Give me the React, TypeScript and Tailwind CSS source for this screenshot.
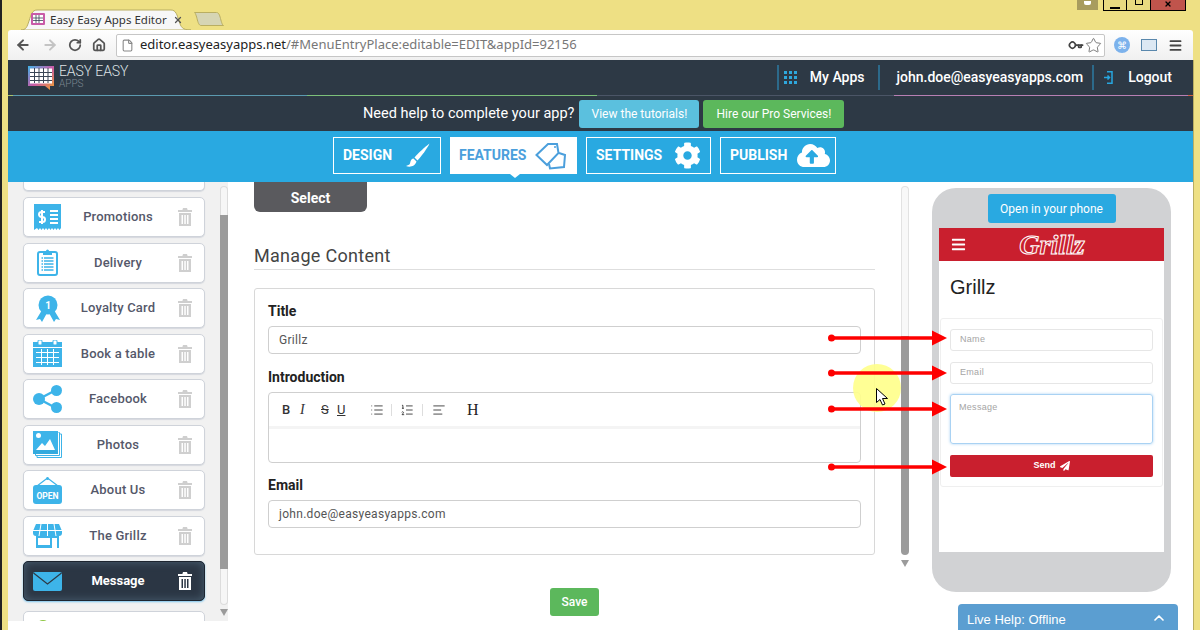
import React from "react";
import {
  ArrowLeft,
  ArrowRight,
  RotateCw,
  Home,
  File,
  Star,
  Key,
  Menu,
  List,
  ListOrdered,
  AlignLeft,
  ChevronUp,
  X,
} from "lucide-react";
import { FaCog, FaCloudUploadAlt, FaPaperPlane, FaBars } from "react-icons/fa";

function Trash({ dark }: { dark?: boolean }) {
  return (
    <svg width="14" height="18" viewBox="0 0 14 18" className={dark ? "text-white" : "text-[#cfcfcf]"}>
      <path fill="currentColor" d="M5 0h4l.6 2H14v2H0V2h4.400z" />
      <path fill="currentColor" fillRule="evenodd" d="M1 5h12v13H1zM3.500 7v9h1.500V7zM6.300 7v9h1.500V7zM9 7v9h1.500V7z" />
    </svg>
  );
}

function PromoIcon() {
  return (
    <svg width="27" height="27" viewBox="0 0 27 27">
      <path fill="#3db4e9" d="M0 0h27v24l-1.500 2-1.500-2-1.500 2-1.500-2-1.500 2-1.500-2-1.500 2-1.500-2-1.500 2-1.500-2-1.500 2-1.500-2-1.500 2-1.500-2-1.500 2-1.500-2L0 26z" />
      <path fill="none" stroke="#fff" strokeWidth="2" d="M11 8H7.500a2.200 2.200 0 0 0 0 5h1a2.200 2.200 0 0 1 0 5H5M8 6v14" />
      <path stroke="#fff" strokeWidth="2" d="M16 7h8M16 11h8M16 15h8M16 19h8" />
    </svg>
  );
}

function ClipboardIcon() {
  return (
    <svg width="21" height="27" viewBox="0 0 21 27">
      <rect x="1" y="3" width="19" height="23" rx="2" fill="#fff" stroke="#3db4e9" strokeWidth="2" />
      <path fill="#3db4e9" d="M6 2h3a1.500 1.500 0 0 1 3 0h3v4H6z" />
      <path stroke="#3db4e9" strokeWidth="1.300" strokeDasharray="1.500 1 10 0" d="M4.500 9h12M4.500 12h12M4.500 15h12M4.500 18h12M4.500 21h12" />
    </svg>
  );
}

function RibbonIcon() {
  return (
    <svg width="24" height="27" viewBox="0 0 24 27">
      <path fill="#3db4e9" d="M6 15 0 25l4-1 2 3 5-9zM18 15l6 10-4-1-2 3-5-9z" />
      <circle cx="12" cy="10" r="9.500" fill="#3db4e9" />
      <text x="12" y="14" textAnchor="middle" fill="#fff" fontSize="10" fontWeight="700" fontFamily="Roboto, sans-serif">1</text>
    </svg>
  );
}

function CalendarIcon() {
  return (
    <svg width="29" height="27" viewBox="0 0 29 27">
      <path fill="#3db4e9" d="M0 2h29v25H0z" />
      <rect x="5" y="0" width="4" height="5" rx="1" fill="#fff" stroke="#3db4e9" />
      <rect x="20" y="0" width="4" height="5" rx="1" fill="#fff" stroke="#3db4e9" />
      <path stroke="#fff" strokeWidth="1" d="M0 7.500h29M3 12.500h23M3 17.500h23M3 22.500h23M8.500 9v16M14.500 9v16M20.500 9v16" />
    </svg>
  );
}

function ShareIcon() {
  return (
    <svg width="30" height="28" viewBox="0 0 30 28">
      <path stroke="#3db4e9" strokeWidth="2.500" d="M6 14 23 5M6 14l17 9" />
      <circle cx="6" cy="14" r="6" fill="#3db4e9" />
      <circle cx="23.500" cy="5.500" r="5.500" fill="#3db4e9" />
      <circle cx="23.500" cy="22.500" r="5.500" fill="#3db4e9" />
    </svg>
  );
}

function PhotosIcon() {
  return (
    <svg width="29" height="27" viewBox="0 0 29 27">
      <path fill="none" stroke="#3db4e9" d="M27 3h1.500v23.500H4V25M25.500 1.500h1v23h-24V23" />
      <path fill="#3db4e9" d="M0 0h25v23H0z" />
      <path fill="#fff" d="M3 19l6-7 3 3 5-7 5 11z" />
      <circle cx="5.500" cy="4.500" r="2.500" fill="#fff" />
      <path fill="#2a9fd4" d="M0 19h25v4H0z" opacity=".5" />
    </svg>
  );
}

function OpenIcon() {
  return (
    <svg width="29" height="27" viewBox="0 0 29 27">
      <path fill="none" stroke="#3db4e9" strokeWidth="1.200" d="M4 9 14.500 1 25 9" />
      <circle cx="14.500" cy="1.500" r="1.500" fill="#3db4e9" />
      <rect x="0" y="8" width="29" height="19" rx="3" fill="#3db4e9" />
      <text x="14.500" y="22" textAnchor="middle" fill="#fff" fontSize="8.500" fontWeight="700" fontFamily="Roboto, sans-serif">OPEN</text>
    </svg>
  );
}

function ShopIcon() {
  return (
    <svg width="29" height="24" viewBox="0 0 29 24">
      <path fill="#3db4e9" d="M3 0h23l3 7v2a3 3 0 0 1-3 3H3a3 3 0 0 1-3-3V7z" />
      <path stroke="#fff" d="M0 6.500h29M8 0 6 12M14.500 0v12M21 0l2 12" />
      <path fill="#3db4e9" d="M3 12h23v12H3z" />
      <path fill="#fff" d="M5 14h12v7H5zM19 14h5v10h-5z" />
    </svg>
  );
}

function MailIcon() {
  return (
    <svg width="29" height="19" viewBox="0 0 29 19">
      <rect width="29" height="19" rx="2" fill="#3db4e9" />
      <path fill="none" stroke="#2d3945" strokeWidth="1.200" d="M.5 1 14.500 12 28.500 1" />
    </svg>
  );
}

function LogoIcon() {
  return (
    <svg width="28" height="26" viewBox="0 0 28 26">
      <defs>
        <linearGradient id="logoEdge" x1="0" y1="0" x2="1" y2="1">
          <stop offset="0" stopColor="#3fb4e8" />
          <stop offset=".5" stopColor="#c95ba8" />
          <stop offset="1" stopColor="#f2a32a" />
        </linearGradient>
      </defs>
      <path fill="url(#logoEdge)" d="M1 1h26v20h-4v4l-5-4H1z" />
      <path fill="#fff" d="M3 3.500h22v15H3z" />
      <path stroke="#3a4656" strokeWidth="1" d="M3 7.500h22M3 11.500h22M3 15.500h22M7.500 3v15M12 3v15M16.500 3v15M21 3v15" />
    </svg>
  );
}

function GridDots() {
  return (
    <svg width="13" height="13" viewBox="0 0 13 13" fill="#2ea7dc">
      <path d="M0 0h3v3H0zM5 0h3v3H5zM10 0h3v3h-3zM0 5h3v3H0zM5 5h3v3H5zM10 5h3v3h-3zM0 10h3v3H0zM5 10h3v3H5zM10 10h3v3h-3z" />
    </svg>
  );
}

function BrushIcon() {
  return (
    <svg width="24" height="25" viewBox="0 0 24 25" fill="#fff">
      <path d="M23.500 .5C19 4 12 10 8.500 14.500l3 3C15.500 13 21 6 23.500 .5z" />
      <path d="M7.500 15.500c-3 .5-3 3.500-3.500 5-.4 1.400-2.500 2-4 2.500 4 1.500 9 .5 10.500-4.500z" />
    </svg>
  );
}

function TagsIcon() {
  return (
    <svg width="32" height="28" viewBox="0 0 32 28" fill="none" stroke="#4b9fdc" strokeWidth="2">
      <path d="M1.500 13 13 2h9l1.500 9L12 23z" fill="#fff" />
      <circle cx="20" cy="5" r="1" fill="#4b9fdc" stroke="none" />
      <path d="M24 11l6 2-1 12-14 1.500L14 22" />
    </svg>
  );
}

function LogoutIcon() {
  return (
    <svg width="9" height="13" viewBox="0 0 9 13" fill="none" stroke="#27a6df" strokeWidth="1.500">
      <path d="M3 .8h5v11.400H3M0 6.500h5M3.500 4.500l2 2-2 2" />
    </svg>
  );
}

function Cursor() {
  return (
    <svg width="12" height="18" viewBox="0 0 12 18">
      <path fill="#fff" stroke="#000" d="M.5.500v14l3.500-3 2.500 5.500 2.500-1-2.500-5.500h5z" />
    </svg>
  );
}

function PointerArrow({ top }: { top: number }) {
  return (
    <svg
      width="120"
      height="18"
      viewBox="0 0 120 18"
      className="absolute left-[826px]"
      style={{ top }}
    >
      <circle cx="3.500" cy="9" r="3.500" fill="#fe0000" />
      <path stroke="#fe0000" strokeWidth="3.500" d="M3 9h104" />
      <path fill="#fe0000" d="M104 1.500 119 9l-15 7.500z" />
    </svg>
  );
}

const sideItems = [
  { name: "Promotions", icon: <PromoIcon /> },
  { name: "Delivery", icon: <ClipboardIcon /> },
  { name: "Loyalty Card", icon: <RibbonIcon /> },
  { name: "Book a table", icon: <CalendarIcon /> },
  { name: "Facebook", icon: <ShareIcon /> },
  { name: "Photos", icon: <PhotosIcon /> },
  { name: "About Us", icon: <OpenIcon /> },
  { name: "The Grillz", icon: <ShopIcon /> },
];

function Sidebar() {
  return (
    <div className="w-[220px] h-[439px] bg-[#f1f1f1] flex shrink-0 overflow-hidden">
      <div className="w-[212px] pl-[15px] pr-[15px]">
        <div className="h-[9px] mb-[6px] bg-white border-x border-b border-[#cfd3da] rounded-b-[5px] shadow-[0_1px_1px_#d5d8de]" />
        {sideItems.map(({ name, icon }) => (
          <div
            key={name}
            className="h-10 mb-[5.5px] bg-white border border-[#cfd3da] rounded-[5px] shadow-[0_1px_1px_#d5d8de] flex items-center"
          >
            <div className="w-[46px] flex justify-center pl-[1px] pr-0 shrink-0">{icon}</div>
            <div className="flex-1 text-center text-[13px] font-medium text-[#55586a] tracking-[0.2px]">{name}</div>
            <div className="w-[38px] flex justify-center pr-[1px]">
              <Trash />
            </div>
          </div>
        ))}
        <div className="h-10 mb-[10px] bg-[#2b3644] border border-[#1d2530] rounded-[5px] shadow-[inset_0_0_8px_#4a6072,0_1px_2px_#7cc4ec] flex items-center">
          <div className="w-[46px] flex justify-center shrink-0">
            <MailIcon />
          </div>
          <div className="flex-1 text-center text-[13px] font-bold text-white">Message</div>
          <div className="w-[38px] flex justify-center pr-[1px]">
            <Trash dark />
          </div>
        </div>
        <div className="h-10 bg-white border border-[#cfd3da] rounded-[5px] flex justify-center-safe pr-[143px] pt-[8px]">
          <div className="w-[14px] h-[14px] rounded-full bg-[#8cc63f]" />
        </div>
      </div>
      <div className="w-2 flex flex-col items-center pt-[4px]">
        <div className="w-2 h-[29px] bg-[#f6f6f6] border-x border-t border-[#dcdcdc] rounded-t-[4px]" />
        <div className="w-2 h-[354px] bg-[#9b9b9b]" />
        <div className="w-2 h-[36px] bg-[#f6f6f6] border-x border-b border-[#dcdcdc] rounded-b-[4px]" />
        <div className="mt-[4px] w-0 h-0 border-x-[4px] border-x-transparent border-t-[7px] border-t-[#9b9b9b]" />
      </div>
    </div>
  );
}

function TextField({ value }: { value: string }) {
  return (
    <div className="h-[28px] border border-[#cfcfcf] rounded-[4px] px-[10px] flex items-center text-[12px] text-[#555] tracking-[0.3px]">
      {value}
    </div>
  );
}

function EditorToolbar() {
  return (
    <div className="h-[36px] border-b-[3px] border-[#f4f4f4] flex items-center pl-[13px] text-[#333] text-[13px]">
      <span className="w-[18px] font-medium">B</span>
      <span className="w-[21px] italic font-serif-none [font-family:'Liberation_Serif',serif] text-[14px]">I</span>
      <span className="w-[16px] line-through">S</span>
      <span className="w-[33px] underline">U</span>
      <List size={14} strokeWidth={1.500} />
      <span className="w-[1px] h-[12px] bg-[#ddd] ml-[7px] mr-[8px]" />
      <ListOrdered size={14} strokeWidth={1.500} />
      <span className="w-[1px] h-[12px] bg-[#ddd] ml-[8px] mr-[9px]" />
      <AlignLeft size={14} strokeWidth={1.500} />
      <span className="ml-[21px] text-[16px] font-medium text-[#222] [font-family:'Liberation_Serif',serif]">H</span>
    </div>
  );
}

function MainPane() {
  return (
    <div className="w-[673px] shrink-0 pl-[26px]">
      <div className="w-[113px] h-[30px] bg-[#5a5a5e] rounded-b-[6px] text-white text-[14px] font-bold flex items-center justify-center pt-[3px]">
        Select
      </div>
      <div className="w-[621px] mt-[33px] h-[25px] border-b border-[#dedede] text-[18px] leading-[22px] text-[#444] tracking-[0.3px]">
        Manage Content
      </div>
      <div className="w-[621px] h-[267px] mt-[18px] border border-[#d8d8d8] rounded-[3px] px-[13px] pt-[14px]">
        <div className="text-[14px] leading-[16px] font-bold text-[#222]">Title</div>
        <div className="mt-[7px]">
          <TextField value="Grillz" />
        </div>
        <div className="mt-[15px] text-[14px] leading-[16px] font-bold text-[#222]">Introduction</div>
        <div className="mt-[7px] h-[71px] border border-[#cfcfcf] rounded-[4px]">
          <EditorToolbar />
        </div>
        <div className="mt-[14px] text-[14px] leading-[16px] font-bold text-[#222]">Email</div>
        <div className="mt-[7px]">
          <TextField value="john.doe@easyeasyapps.com" />
        </div>
      </div>
      <div className="mt-[33px] ml-[296px] w-[49px] h-[28px] bg-[#5cb85c] rounded-[3px] text-white text-[12px] font-medium flex items-center justify-center">
        Save
      </div>
    </div>
  );
}

function MainScrollbar() {
  return (
    <div className="w-2 shrink-0 flex flex-col items-center pt-[4px]">
      <div className="w-2 h-[150px] bg-[#f8f8f8] border-x border-t border-[#e2e2e2] rounded-t-[4px]" />
      <div className="w-2 h-[219px] bg-[#9b9b9b] rounded-b-[4px]" />
      <div className="mt-[5px] w-0 h-0 border-x-[4px] border-x-transparent border-t-[7px] border-t-[#9b9b9b]" />
    </div>
  );
}

function PhoneInput({ label, className }: { label: string; className?: string }) {
  return (
    <div className={`border border-[#e6e6e6] rounded-[3px] px-[9px] flex text-[9px] font-medium text-[#a5a5a5] tracking-[0.3px] ${className}`}>
      {label}
    </div>
  );
}

function PhonePreview() {
  return (
    <div className="w-[239px] h-[404px] mt-[6px] ml-[23px] shrink-0 bg-[#d1d2d4] rounded-[24px] px-[7px] pt-[6px]">
      <div className="w-[128px] h-[29px] mx-auto bg-[#29a9e1] rounded-[3px] text-white text-[12px] flex items-center justify-center">
        Open in your phone
      </div>
      <div className="mt-[5px] h-[324px] bg-white">
        <div className="relative h-[33px] bg-[#c91f2e] flex items-center justify-center">
          <FaBars className="absolute left-[12px] top-[9px] text-white" size={15} />
          <span className="text-[#c91f2e] italic font-bold text-[28px] leading-none [font-family:'Liberation_Serif',serif] [-webkit-text-stroke:1px_#fff] ml-[1px]">
            Grillz
          </span>
        </div>
        <div className="h-[57px] pl-[11px] pt-[14px] text-[20px] leading-[24px] text-[#222] [font-family:'Liberation_Sans',sans-serif]">
          Grillz
        </div>
        <div className="mx-[1px] h-[169px] border border-[#efefef] rounded-[3px] px-[9px] pt-[10px] [font-family:'Liberation_Sans',sans-serif]">
          <PhoneInput label="Name" className="h-[22px] items-center" />
          <PhoneInput label="Email" className="h-[22px] mt-[11px] items-center" />
          <PhoneInput label="Message" className="h-[50px] mt-[10px] pt-[6px] !border-[#a9d2f3] shadow-[0_0_3px_#a9d2f3] !px-[8px]" />
          <div className="mt-[11px] h-[22px] bg-[#c91f2e] rounded-[2px] text-white text-[9px] font-bold flex items-center justify-center gap-[4px]">
            Send <FaPaperPlane size={10} />
          </div>
        </div>
      </div>
    </div>
  );
}

function BrowserChrome() {
  return (
    <>
      <div className="h-[30px] flex items-end pl-[13px] relative">
        <div className="relative w-[170px] h-[21px]">
          <svg width="170" height="21" viewBox="0 0 170 21" className="absolute inset-0">
            <path fill="#f7f7f7" stroke="#b9ae62" d="M0 21c5 0 6-3 8-9s3-11 8-11h134c5 0 6 5 8 11s3 9 12 9z" />
          </svg>
          <div className="relative h-full flex items-center pl-[9px] pr-[8px] text-[11.500px] text-[#333] [font-family:'Noto_Sans',sans-serif]">
            <svg width="14" height="13" viewBox="0 0 14 13" className="shrink-0 ml-[1px] mr-[5px]">
              <rect width="14" height="12" rx="1" fill="#c95ba8" />
              <rect x="2" y="2" width="10" height="8" fill="#fff" />
              <path stroke="#3a4656" strokeWidth=".8" d="M2 5h10M2 7.500h10M5 2v8M8 2v8" />
            </svg>
            <span className="flex-1">Easy Easy Apps Editor</span>
            <X size={10} strokeWidth={3} className="text-[#555]" />
          </div>
        </div>
        <svg width="30" height="14" viewBox="0 0 30 14" className="ml-[3px] mb-[4px]">
          <path fill="#d6d5b4" stroke="#b9ae62" d="M.5 .5h22c2 0 3 2 4 6s2 7 3 7H7c-2 0-3-3-4-7S1 .5.500.5z" />
        </svg>
        <div className="absolute right-[7px] top-0 flex items-start">
          <div className="w-[21px] h-[10px] bg-[#a89c5e] mr-[5px] flex justify-center">
            <div className="w-[7px] h-[4px] bg-white rounded-b-[2px] mt-[1px]" />
          </div>
          <div className="w-[24px] h-[11px] bg-[#e8da80] border border-t-0 border-black flex justify-center items-end pb-[1px]">
            <div className="w-[10px] h-[2px] bg-black" />
          </div>
          <div className="w-[23px] h-[11px] bg-[#e8da80] border-y border-t-0 border-black flex justify-center items-start">
            <div className="w-[8px] h-[5px] border border-t-0 border-black" />
          </div>
          <div className="w-[36px] h-[11px] bg-[#c0544c] border border-t-0 border-black flex justify-center items-start text-black">
            <X size={8} strokeWidth={4} />
          </div>
        </div>
      </div>
      <div className="h-[30px] bg-gradient-to-b from-white to-[#f0f0f0] rounded-t-[3px] flex items-center pl-[6px] pr-[6px] text-[#555]">
        <ArrowLeft size={16} strokeWidth={3} className="ml-[1px]" />
        <ArrowRight size={16} strokeWidth={3} className="ml-[11px] text-[#c4c4c4]" />
        <RotateCw size={14} strokeWidth={3} className="ml-[10px]" />
        <Home size={14} strokeWidth={3} className="ml-[10px]" />
        <div className="ml-[10px] h-[23px] w-[989px] bg-white border border-[#c6c6c6] rounded-[2px] flex items-center pl-[4px] pr-[2px] [font-family:'Noto_Sans',sans-serif] text-[13px]">
          <File size={13} className="text-[#888] mr-[6px]" />
          <span className="text-[#222]">editor.easyeasyapps.net</span>
          <span className="text-[#777] flex-1">/#MenuEntryPlace:editable=EDIT&amp;appId=92156</span>
          <Key size={13} strokeWidth={3} className="text-[#444] mr-[3px] rotate-45" />
          <Star size={17} strokeWidth={1.200} className="text-[#666]" />
        </div>
        <div className="ml-[9px] w-[16px] h-[16px] rounded-full bg-[#7cb2ec] text-white text-[10px] flex items-center justify-center">⌘</div>
        <div className="ml-[11px] w-[16px] h-[12px] bg-[#dce8f3] border border-[#5a88ad]" />
        <Menu size={15} strokeWidth={3} className="ml-[11px] text-[#444]" />
      </div>
    </>
  );
}

function AppHeader() {
  return (
    <div className="h-[35px] bg-[#2d3945] flex items-center pl-[19px] text-white text-[14px] font-medium relative">
      <LogoIcon />
      <div className="ml-[4px] mt-[-3px]">
        <div className="text-[14px] leading-[14px] font-light text-[#dfe3e6] tracking-[-0.1px]">EASY EASY</div>
        <div className="text-[10px] leading-[11px] font-light text-[#7c8791]">APPS</div>
      </div>
      <div className="flex-1" />
      <div className="w-[2px] h-[25px] bg-[#2c6a8b]" />
      <div className="ml-[5px] mr-[13px]">
        <GridDots />
      </div>
      <span>My Apps</span>
      <div className="w-[2px] h-[25px] bg-[#2c6a8b] ml-[13px] mr-[17px]" />
      <span>john.doe@easyeasyapps.com</span>
      <div className="w-[2px] h-[25px] bg-[#2c6a8b] ml-[9px] mr-[10px]" />
      <LogoutIcon />
      <span className="ml-[15px] mr-[21px]">Logout</span>
    </div>
  );
}

function RainbowLine() {
  return (
    <div className="h-[1px] flex">
      <div className="w-[5px] bg-[#a9c46c]" />
      <div className="w-[294px] bg-[#5b9ab0]" />
      <div className="w-[290px] bg-[#7cc07a]" />
      <div className="w-[297px] bg-[#4b5566]" />
      <div className="flex-1 bg-[#b77fb3]" />
      <div className="w-[5px] bg-[#d0603f]" />
    </div>
  );
}

function HelpBar() {
  return (
    <div className="h-[35px] bg-[#2d3945] flex items-center pl-[355px] text-[14.500px] text-white">
      <span>Need help to complete your app?</span>
      <div className="ml-[5px] w-[120px] h-[28px] bg-[#5bc0de] rounded-[3px] text-[12px] flex items-center justify-center">
        View the tutorials!
      </div>
      <div className="ml-[4px] w-[141px] h-[28px] bg-[#5cb85c] rounded-[3px] text-[12px] flex items-center justify-center">
        Hire our Pro Services!
      </div>
    </div>
  );
}

function StepNav() {
  const box = "h-[37px] flex items-center justify-between text-[14px] font-bold";
  return (
    <div className="h-[51px] bg-[#29a9e1] flex items-start pl-[325px] pt-[6px] gap-[9px]">
      <div className={`${box} w-[108px] pl-[9px] pr-[10px] border border-white text-white`}>
        DESIGN <BrushIcon />
      </div>
      <div className={`${box} w-[127px] pl-[9px] pr-[10px] bg-white text-[#4b9fdc] relative`}>
        FEATURES <TagsIcon />
        <div className="absolute left-[60px] -bottom-[4px] w-0 h-0 border-x-[5px] border-x-transparent border-t-[4px] border-t-white" />
      </div>
      <div className={`${box} w-[125px] pl-[9px] pr-[9px] border border-white text-white`}>
        SETTINGS <FaCog size={27} />
      </div>
      <div className={`${box} w-[116px] pl-[9px] pr-[5px] border border-white text-white`}>
        PUBLISH <FaCloudUploadAlt size={33} />
      </div>
    </div>
  );
}

export default function App() {
  return (
    <div className="w-[1200px] h-[630px] overflow-hidden relative bg-[#eee084] px-[7px] [font-family:Roboto,sans-serif] border-l-[2px] border-l-[#222] pl-[6px]">
      <BrowserChrome />
      <div className="w-[1186px] h-[570px] bg-white border-r border-[#b9ae62] overflow-hidden">
        <AppHeader />
        <RainbowLine />
        <HelpBar />
        <StepNav />
        <div className="flex h-[448px]">
          <Sidebar />
          <MainPane />
          <MainScrollbar />
          <PhonePreview />
        </div>
      </div>
      <div className="absolute left-[851px] top-[364px] w-[48px] h-[48px] rounded-full bg-[#ffff8a]/90" />
      <div className="absolute left-[874px] top-[388px]">
        <Cursor />
      </div>
      <PointerArrow top={329} />
      <PointerArrow top={364} />
      <PointerArrow top={400} />
      <PointerArrow top={458} />
      <div className="absolute left-[956px] top-[604px] w-[220px] h-[30px] bg-[#5b9ed1] rounded-t-[4px] flex items-start pt-[6px] justify-between pl-[9px] pr-[11px] text-white text-[13px] [font-family:'Liberation_Sans',sans-serif]">
        Live Help: Offline
        <ChevronUp size={16} strokeWidth={2.500} />
      </div>
    </div>
  );
}
